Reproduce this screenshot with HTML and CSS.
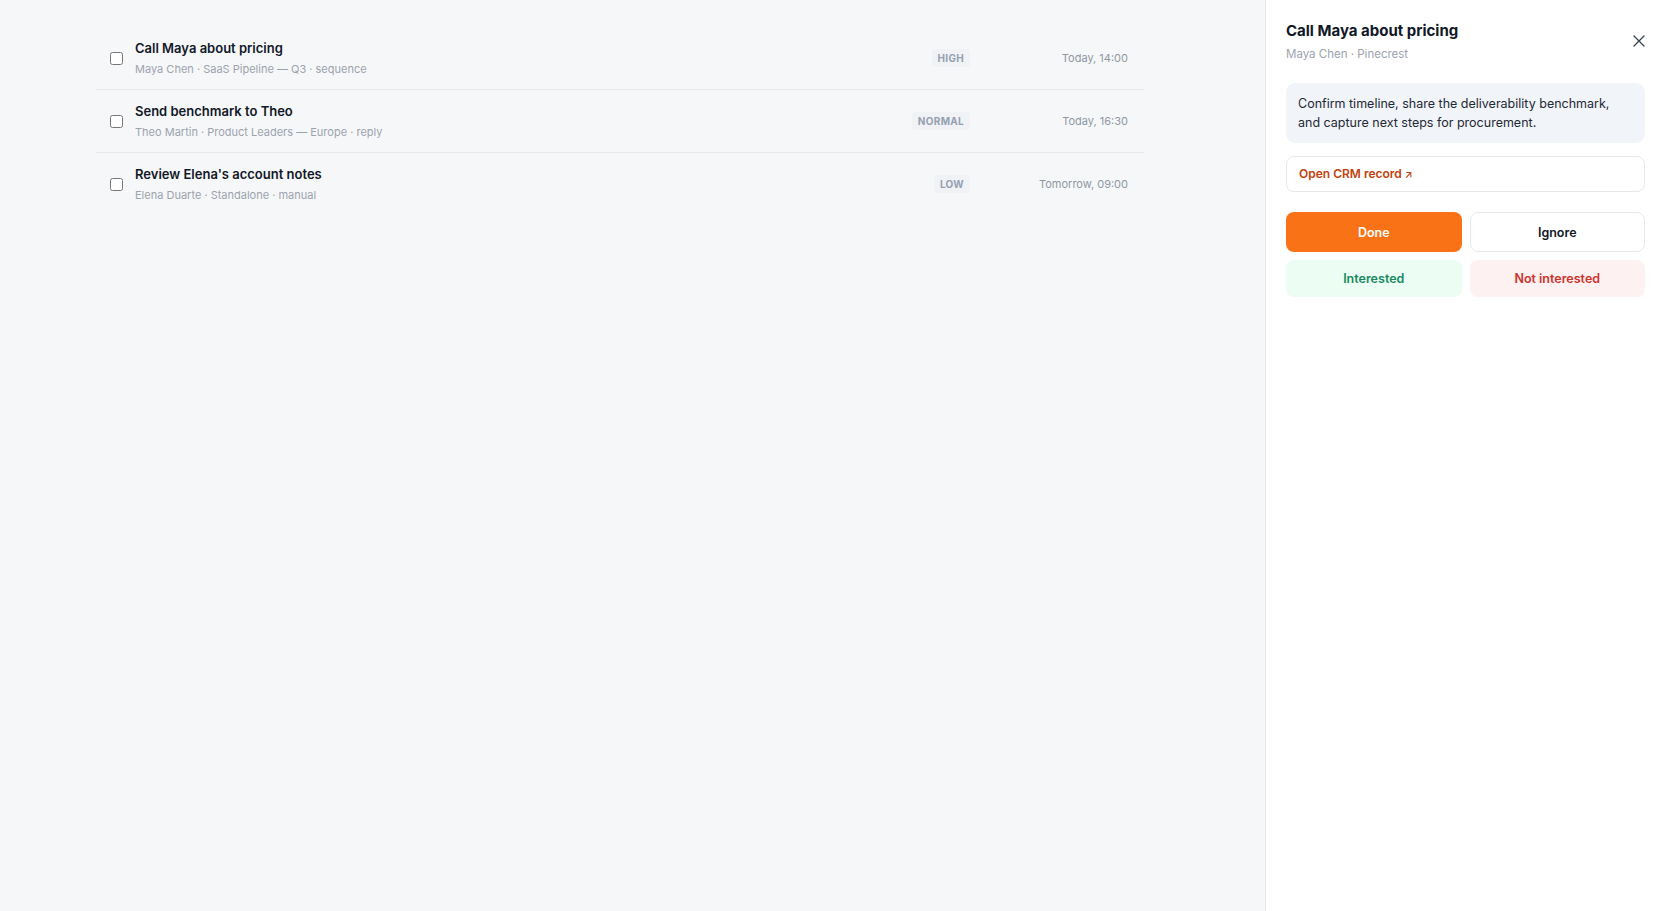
FILE: index.html
```html
<!DOCTYPE html>
<html lang="en">
<head>
  <meta charset="UTF-8">
  <meta name="viewport" content="width=device-width, initial-scale=1.0">
  <title>Tasks</title>
  <link rel="stylesheet" href="styles.css">
</head>
<body>
  <main class="main">
    <div class="task-list">
      <div class="task-row">
        <input type="checkbox" class="task-check">
        <div class="task-info">
          <div class="task-title">Call Maya about pricing</div>
          <div class="task-meta">Maya Chen · SaaS Pipeline — Q3 · sequence</div>
        </div>
        <span class="badge">HIGH</span>
        <span class="task-time">Today, 14:00</span>
      </div>
      <div class="task-row">
        <input type="checkbox" class="task-check">
        <div class="task-info">
          <div class="task-title">Send benchmark to Theo</div>
          <div class="task-meta">Theo Martin · Product Leaders — Europe · reply</div>
        </div>
        <span class="badge">NORMAL</span>
        <span class="task-time">Today, 16:30</span>
      </div>
      <div class="task-row">
        <input type="checkbox" class="task-check">
        <div class="task-info">
          <div class="task-title">Review Elena's account notes</div>
          <div class="task-meta">Elena Duarte · Standalone · manual</div>
        </div>
        <span class="badge">LOW</span>
        <span class="task-time">Tomorrow, 09:00</span>
      </div>
    </div>
  </main>

  <aside class="panel">
    <div class="panel-header">
      <div>
        <h2 class="panel-title">Call Maya about pricing</h2>
        <div class="panel-sub">Maya Chen · Pinecrest</div>
      </div>
      <button class="close-btn" aria-label="Close">
        <svg width="12" height="12" viewBox="0 0 12 12" fill="none" stroke="#374151" stroke-width="1.3" stroke-linecap="round">
          <path d="M1 1 L11 11 M11 1 L1 11"/>
        </svg>
      </button>
    </div>

    <div class="note">Confirm timeline, share the deliverability benchmark, and capture next steps for procurement.</div>

    <a class="crm-link" href="#">Open CRM record <span class="arrow">↗</span></a>

    <div class="actions">
      <button class="btn btn-done">Done</button>
      <button class="btn btn-ignore">Ignore</button>
      <button class="btn btn-yes">Interested</button>
      <button class="btn btn-no">Not interested</button>
    </div>
  </aside>
</body>
</html>
```

FILE: styles.css
```css
body {
  font-family: Inter, "Noto Sans", sans-serif;
  margin: 0;
  background-color: #f6f7f9;
  color: #111827;
  display: flex;
  height: 100vh;
  overflow: hidden;
}
.main {
  flex: 1;
  padding: 27px 0 0 96px;
}
.task-list {
  width: 1048px;
}
.task-row {
  display: flex;
  align-items: center;
  padding: 12px 16px 12px 14px;
  border-bottom: 1px solid #e6e8ec;
}
.task-row:last-child {
  border-bottom: none;
}
.task-check {
  width: 13px;
  height: 13px;
  margin: 0 12px 0 0;
}
.task-info {
  flex: 1;
}
.task-title {
  font-size: 13px;
  font-weight: 600;
  line-height: 18px;
  color: #111827;
}
.task-meta {
  font-size: 11px;
  line-height: 16px;
  margin-top: 4px;
  color: #9ca3af;
}
.badge {
  font-size: 10px;
  font-weight: 700;
  letter-spacing: 0.03em;
  color: #94a0b2;
  background-color: #f0f2f5;
  padding: 3px 6px;
  border-radius: 4px;
}
.task-time {
  width: 142px;
  margin-left: 16px;
  text-align: right;
  font-size: 11px;
  color: #8f97a3;
}

/* detail panel */
.panel {
  width: 359px;
  padding: 21px 20px 20px;
  background-color: #fff;
  border-left: 1px solid #e5e7eb;
}
.panel-header {
  display: flex;
  align-items: center;
  justify-content: space-between;
}
.panel-title {
  margin: 0;
  font-size: 15px;
  font-weight: 700;
  line-height: 20px;
  color: #111827;
}
.panel-sub {
  margin-top: 5px;
  font-size: 11.5px;
  line-height: 16px;
  color: #9ca3af;
}
.close-btn {
  border: none;
  background: none;
  padding: 0;
  margin-bottom: 2px;
  width: 12px;
  height: 12px;
  cursor: pointer;
  display: flex;
}
.note {
  margin-top: 21px;
  padding: 11px 12px;
  background-color: #f1f4f8;
  border-radius: 9px;
  font-size: 12.5px;
  line-height: 19px;
  color: #1f2937;
}
.crm-link {
  display: block;
  margin-top: 13px;
  padding: 9px 12px;
  border: 1px solid #e5e7eb;
  border-radius: 8px;
  font-size: 12px;
  font-weight: 600;
  line-height: 15px;
  color: #c2410c;
  text-decoration: none;
}
.crm-link .arrow {
  font-size: 10px;
}
.actions {
  margin-top: 20px;
  display: grid;
  grid-template-columns: 1fr 1fr;
  gap: 8px;
}
.btn {
  font-family: inherit;
  font-size: 12.5px;
  font-weight: 600;
  border-radius: 8px;
  border: 1px solid transparent;
  cursor: pointer;
  height: 37px;
}
.btn-done {
  height: 40px;
  background-color: #f97316;
  color: #fff;
}
.btn-ignore {
  height: 40px;
  background-color: #fff;
  border-color: #e5e7eb;
  color: #111827;
}
.btn-yes {
  background-color: #ecfdf3;
  color: #168a5e;
}
.btn-no {
  background-color: #fef1f1;
  color: #d0312d;
}
```
